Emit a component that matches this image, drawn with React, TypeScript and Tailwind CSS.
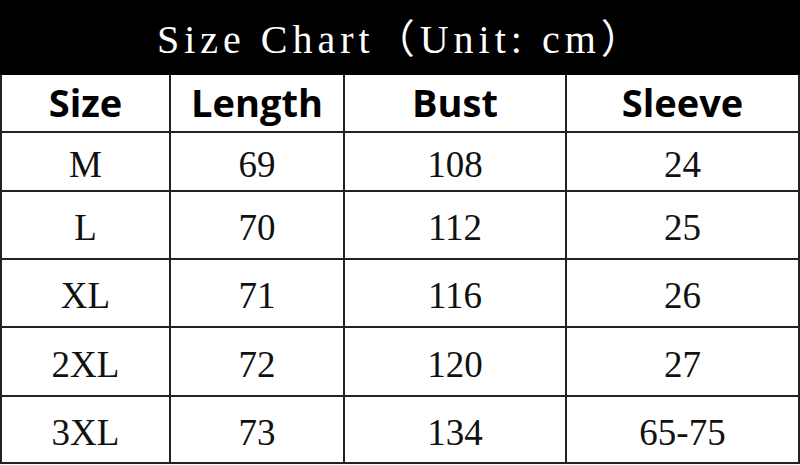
import React from 'react';

const headers = ['Size', 'Length', 'Bust', 'Sleeve'];

const rows: { cells: string[]; h: string }[] = [
  { cells: ['M', '69', '108', '24'], h: 'h-[59px]' },
  { cells: ['L', '70', '112', '25'], h: 'h-[68px]' },
  { cells: ['XL', '71', '116', '26'], h: 'h-[68px]' },
  { cells: ['2XL', '72', '120', '27'], h: 'h-[69px]' },
  { cells: ['3XL', '73', '134', '65-75'], h: 'h-[67px]' },
];

const colWidths = ['w-[171px] border-l-2', 'w-[174px]', 'w-[222px]', 'flex-1'];

export default function App() {
  return (
    <div className="w-[800px] h-[465px] bg-white overflow-hidden">
      {/* Title bar */}
      <div className="h-[75px] bg-black flex items-center pl-[157px]">
        <span className="text-white text-[40px] tracking-[5px] font-['Liberation_Serif','Noto_Sans_CJK_SC',serif] leading-none pt-[4px]">
          Size Chart（Unit: cm）
        </span>
      </div>

      {/* Header row */}
      <div className="flex h-[58px] border-b-2 border-[#222]">
        {headers.map((h, i) => (
          <div
            key={h}
            className={`${colWidths[i]} border-r-2 border-[#222] flex items-center justify-center text-[38px] font-bold text-black font-['Open_Sans',sans-serif] leading-none pb-[2px]`}
          >
            {h}
          </div>
        ))}
      </div>

      {/* Data rows */}
      {rows.map((row) => (
        <div key={row.cells[0]} className={`flex ${row.h} border-b-2 border-[#222]`}>
          {row.cells.map((c, i) => (
            <div
              key={i}
              className={`${colWidths[i]} border-r-2 border-[#222] flex items-center justify-center text-[37px] text-[#111] font-['Liberation_Serif',serif] leading-none pt-[5px]`}
            >
              {c}
            </div>
          ))}
        </div>
      ))}
    </div>
  );
}
